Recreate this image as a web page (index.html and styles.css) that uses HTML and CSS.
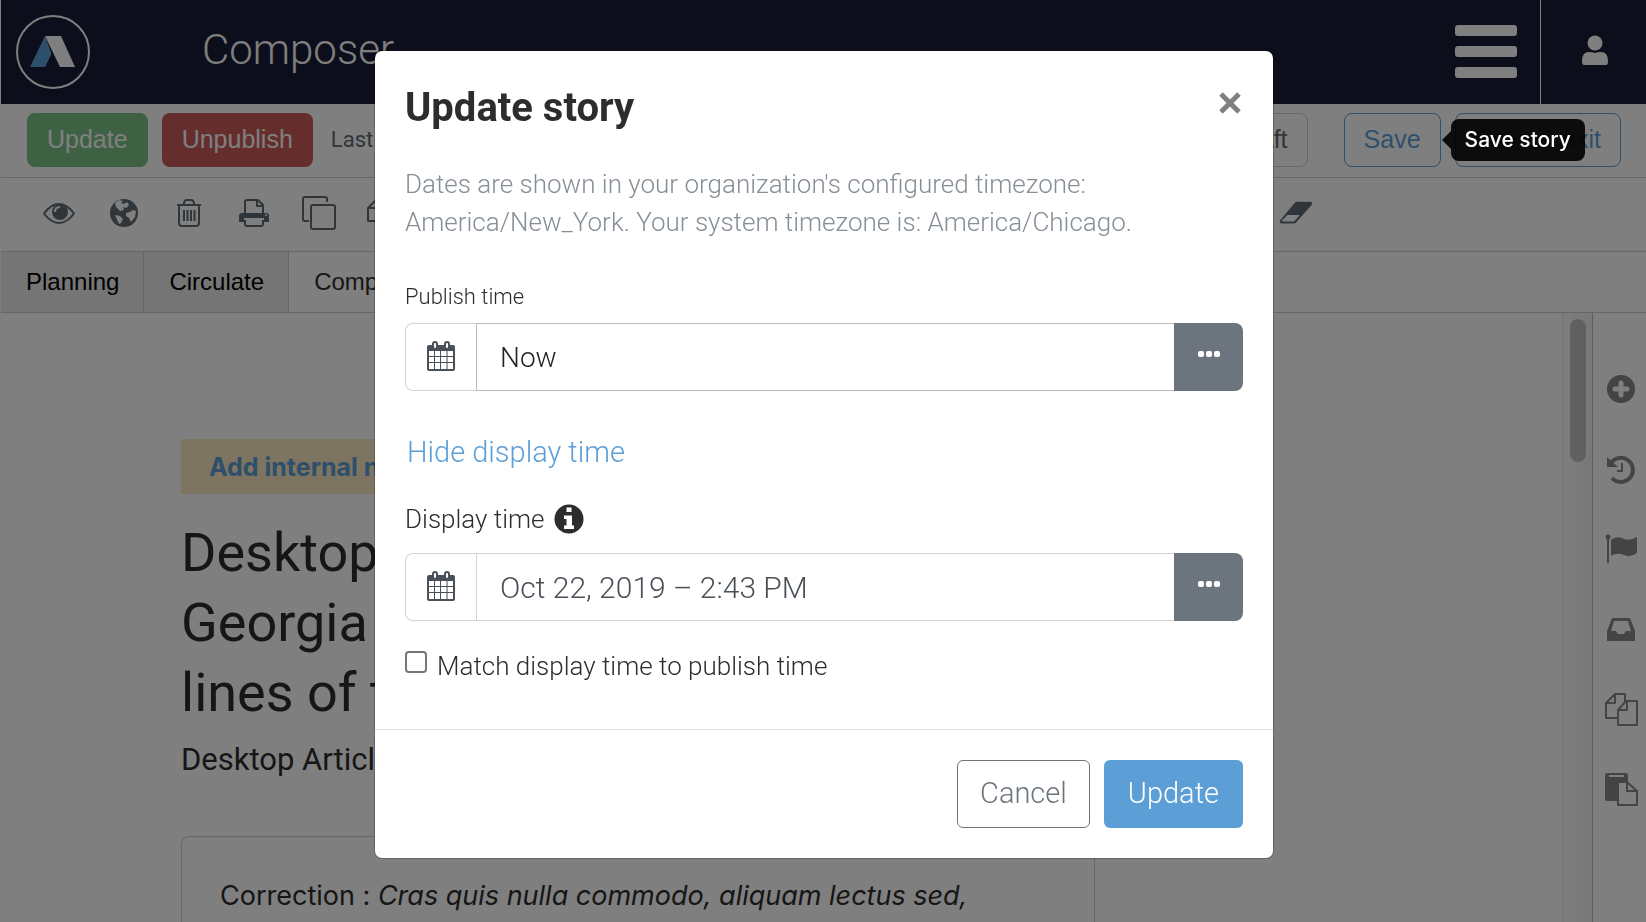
FILE: index.html
```html
<!DOCTYPE html>
<html lang="en">

<head>
  <meta charset="UTF-8" />
  <meta name="viewport" content="width=device-width, initial-scale=1.0" />
  <title>Composer</title>
  <link rel="stylesheet" href="styles.css">
</head>

<body>
  <div class="app">
    <header class="header">
      <svg class="logo" viewBox="0 0 74 74">
        <circle cx="37" cy="37" r="36" fill="none" stroke="#fff" stroke-width="2" />
        <path d="M29 21 L35 37 V40 L29 52 H14 Z" fill="#5c9fd7" />
        <path d="M29 21 H45 L59 52 H44 Z" fill="#fff" />
      </svg>
      <span class="brand">Composer</span>
      <button class="menu" type="button" aria-label="Menu">
        <span></span><span></span><span></span>
      </button>
      <button class="user" type="button" aria-label="Account">
        <svg width="26" height="30" viewBox="0 0 26 30">
          <circle cx="13" cy="8" r="7.5" />
          <path d="M0 26 Q0 17 7 17 Q10 17 13 18 Q16 17 19 17 Q26 17 26 26 Q26 30 24 30 H2 Q0 30 0 26 Z" />
        </svg>
      </button>
    </header>

    <div class="actions">
      <button class="btn green" type="button">Update</button>
      <button class="btn red" type="button">Unpublish</button>
      <span class="last">Last</span>
      <button class="btn draft" type="button">Draft</button>
      <div class="save-wrap">
        <button class="btn blue" type="button">Save</button>
        <div class="tooltip" role="tooltip">Save story</div>
      </div>
      <button class="btn blue" type="button">Save &amp; exit</button>
    </div>

    <div class="toolbar">
      <button type="button" aria-label="Preview">
        <svg viewBox="0 0 34 34">
          <path d="M2 17.500Q9 8 17 8T32 17.500Q25 27 17 27T2 17.500Z" class="line" />
          <circle cx="18" cy="16" r="8" />
          <path d="M13 16Q13 11 18 11" class="cut" />
        </svg>
      </button>
      <button type="button" aria-label="Site">
        <svg viewBox="0 0 34 34">
          <circle cx="17" cy="17" r="14" />
          <path d="M8 7L12 4 16 5 14 7 17 8 20 6 22 9 19 12 16 11 17 14 13 15 9 11Z" class="hole" />
          <path d="M23 16L26 14 29 15 28 21 24 26 22 22 19 20 19 17ZM8 19L13 20 16 23 14 27 12 28Z" class="hole" />
        </svg>
      </button>
      <button type="button" aria-label="Delete">
        <svg viewBox="0 0 34 34">
          <path d="M5 9H29M12 8Q12 4 15 4H19Q22 4 22 8M7 9V27Q7 30 10 30H24Q27 30 27 27V9M12 14V25M15.500 14V25M19 14V25M22.500 14V25" class="line" />
        </svg>
      </button>
      <button type="button" aria-label="Print">
        <svg viewBox="0 0 34 34">
          <path d="M2 26V20Q2 17 5 17H29Q32 17 32 20V26H27V22H7V26Z" />
          <path d="M8 17V6Q8 4 10 4H21L26 9V17M20 4V10H26M8 24V28Q8 30 10 30H24Q26 30 26 28V24" class="line" />
          <circle cx="29" cy="19" r="1" class="hole" />
        </svg>
      </button>
      <button type="button" aria-label="Duplicate">
        <svg viewBox="0 0 34 34">
          <rect x="9" y="9" width="24" height="24" rx="2" class="line" />
          <path d="M7 25H3Q1 25 1 23V3Q1 1 3 1H23Q25 1 25 3V6" class="line" />
        </svg>
      </button>
      <button type="button" aria-label="Copy">
        <svg viewBox="0 0 34 34">
          <path d="M1 12L9 4H20V25H1ZM9 4V12H1" class="line" />
        </svg>
      </button>
      <button class="eraser" type="button" aria-label="Clear formatting">
        <svg viewBox="0 0 36 34">
          <path d="M19 5H34Q36 6 35 8L19 26Q18 28 16 28H3Q0 28 1 25L17 6Z" />
          <path d="M3 25L9 19H22L16 26H4Z" class="hole" />
        </svg>
      </button>
    </div>

    <nav class="tabs">
      <a href="#">Planning</a>
      <a href="#">Circulate</a>
      <a href="#" class="active">Compose</a>
    </nav>

    <div class="workspace">
      <main class="canvas">
        <article class="article">
          <button class="note" type="button">Add internal note</button>
          <h1>Desktop<br>Georgia<br>lines of text</h1>
          <h2>Desktop Article</h2>
          <p class="correction">Correction : <em>Cras quis nulla commodo, aliquam lectus sed,</em></p>
        </article>
      </main>
      <div class="track"><div class="thumb"></div></div>
      <aside class="rail">
        <button type="button" aria-label="Add">
          <svg viewBox="0 0 34 34">
            <circle cx="17" cy="17" r="14" />
            <path d="M17 11V23M11 17H23" class="plus" />
          </svg>
        </button>
        <button type="button" aria-label="History">
          <svg viewBox="0 0 34 34">
            <path d="M7 11A12 12 0 1 1 8 26" class="arc" />
            <path d="M3 5V15H14Z" />
            <path d="M18 11V19H13" class="line" />
          </svg>
        </button>
        <button type="button" aria-label="Flag">
          <svg viewBox="0 0 34 34">
            <circle cx="4" cy="5" r="2.500" />
            <rect x="3" y="5" width="2" height="26" />
            <path d="M7 8Q13 3 20 7Q26 9 33 5V21Q26 26 20 23Q13 20 7 24Z" />
          </svg>
        </button>
        <button type="button" aria-label="Inbox">
          <svg viewBox="0 0 34 34">
            <path d="M8 6H26L31 19V29H3V19Z" />
            <path d="M10 9H24L27 19H22L20 22H14L12 19H7Z" class="hole" />
          </svg>
        </button>
        <button type="button" aria-label="Copies">
          <svg viewBox="0 0 34 34">
            <path d="M13 26H2V11L11 2H21V10M11 2V11H2M14 18L22 9H33V33H14ZM23 9V18H14" class="line" />
          </svg>
        </button>
        <button type="button" aria-label="Paste">
          <svg viewBox="0 0 34 34">
            <path d="M3 1H22Q24 1 24 3V10H14V29H3Q1 29 1 27V3Q1 1 3 1Z" />
            <path d="M5 3H20V5H5Z" class="hole" />
            <path d="M14 10H23L33 19V33H14ZM23 10V19H33" class="line" />
          </svg>
        </button>
      </aside>
    </div>
  </div>

  <div class="backdrop">
    <form class="modal" role="dialog" aria-labelledby="title">
      <div class="modal-body">
        <div class="modal-head">
          <h3 id="title">Update story</h3>
          <button class="close" type="button" aria-label="Close">
            <svg width="22" height="22" viewBox="0 0 22 22">
              <path d="M2 2L20 20M20 2L2 20" />
            </svg>
          </button>
        </div>
        <p class="info">Dates are shown in your organization's configured timezone: America/New_York. Your system timezone is: America/Chicago.</p>

        <label class="label small" for="publish">Publish time</label>
        <div class="group">
          <span class="addon">
            <svg width="28" height="30" viewBox="0 0 28 30">
              <path d="M2 4H26Q28 4 28 6V28Q28 30 26 30H2Q0 30 0 28V6Q0 4 2 4Z" />
              <path d="M2 10H7V15H2ZM8 10H13V15H8ZM14 10H19.500V15H14ZM20.500 10H26V15H20.500ZM2 16H7V21H2ZM8 16H13V21H8ZM14 16H19.500V21H14ZM20.500 16H26V21H20.500ZM2 22H7V28H2ZM8 22H13V28H8ZM14 22H19.500V28H14ZM20.500 22H26V28H20.500Z" class="cells" />
              <rect x="6" y="1" width="4" height="7" rx="2" class="ring" />
              <rect x="18" y="1" width="4" height="7" rx="2" class="ring" />
            </svg>
          </span>
          <input class="field dark" id="publish" type="text" value="Now">
          <button class="more" type="button" aria-label="More publish options"><i></i><i></i><i></i></button>
        </div>

        <a class="toggle" href="#">Hide display time</a>

        <label class="label" for="display">Display time
          <svg width="30" height="30" viewBox="0 0 30 30">
            <circle cx="15" cy="15" r="14.500" fill="#2d2d2d" />
            <path d="M12.500 3.500H17.500V8H12.500ZM10 11.500H18V21.500H20V25H10V21.500H12.500V15H10Z" fill="#fff" />
          </svg>
        </label>
        <div class="group">
          <span class="addon">
            <svg width="28" height="30" viewBox="0 0 28 30">
              <path d="M2 4H26Q28 4 28 6V28Q28 30 26 30H2Q0 30 0 28V6Q0 4 2 4Z" />
              <path d="M2 10H7V15H2ZM8 10H13V15H8ZM14 10H19.500V15H14ZM20.500 10H26V15H20.500ZM2 16H7V21H2ZM8 16H13V21H8ZM14 16H19.500V21H14ZM20.500 16H26V21H20.500ZM2 22H7V28H2ZM8 22H13V28H8ZM14 22H19.500V28H14ZM20.500 22H26V28H20.500Z" class="cells" />
              <rect x="6" y="1" width="4" height="7" rx="2" class="ring" />
              <rect x="18" y="1" width="4" height="7" rx="2" class="ring" />
            </svg>
          </span>
          <input class="field" id="display" type="text" value="Oct 22, 2019 – 2:43 PM">
          <button class="more" type="button" aria-label="More display options"><i></i><i></i><i></i></button>
        </div>

        <div class="check">
          <input type="checkbox" id="match">
          <label for="match">Match display time to publish time</label>
        </div>
      </div>
      <div class="modal-foot">
        <button class="cancel" type="button">Cancel</button>
        <button class="submit" type="submit">Update</button>
      </div>
    </form>
  </div>
</body>

</html>
```

FILE: styles.css
```css
* {
  margin: 0;
  padding: 0;
  box-sizing: border-box;
}

body {
  font-family: Roboto, "Liberation Sans", sans-serif;
  color: #2d2d2d;
  background-color: #fff;
  overflow: hidden;
}

button {
  font: inherit;
  border: 0;
  background: none;
  cursor: pointer;
}

a {
  text-decoration: none;
}

.app {
  height: 100vh;
  display: flex;
  flex-direction: column;
  border-left: 1px solid rgba(255, 255, 255, .1);
}

/* header */
.header {
  height: 104px;
  flex: none;
  display: flex;
  align-items: center;
  padding-left: 15px;
  background-color: #1a1c36;
}

.logo {
  width: 74px;
  height: 74px;
}

.brand {
  margin-left: 112px;
  padding-bottom: 6px;
  font-size: 42px;
  font-weight: 300;
  color: #fff;
}

.menu {
  width: 62px;
  margin-left: auto;
  margin-right: 23px;
  margin-bottom: 2px;
  display: flex;
  flex-direction: column;
  gap: 10px;
}

.menu span {
  height: 11px;
  border-radius: 3px;
  background-color: #fff;
}

.user {
  width: 106px;
  height: 104px;
  padding-left: 2px;
  border-left: 1px solid #fff;
  fill: #fff;
}

/* action buttons */
.actions {
  height: 74px;
  flex: none;
  display: flex;
  align-items: center;
  gap: 14px;
  padding: 0 25px 2px 26px;
  border-bottom: 1px solid #ccc;
}

.btn {
  height: 54px;
  padding: 0 19px 1px;
  font-family: "Liberation Sans", Arial, sans-serif;
  font-size: 25px;
  border: 1px solid transparent;
  border-radius: 8px;
}

.green {
  color: #fff;
  background-color: #7ec286;
}

.red {
  color: #fff;
  background-color: #ca5c58;
}

.last {
  margin-left: 4px;
  font-size: 22px;
  color: #5f6b73;
}

.draft {
  margin-left: auto;
  margin-right: 22px;
  color: #5f6b73;
  border-color: #ccc;
}

.blue {
  color: #5c9fd7;
  border-color: #5c9fd7;
}

.save-wrap {
  position: relative;
}

.tooltip {
  position: absolute;
  z-index: 20;
  left: 107px;
  top: 6px;
  padding: 0 14px;
  line-height: 42px;
  font-family: Inter, sans-serif;
  font-size: 21px;
  font-weight: 500;
  white-space: nowrap;
  color: #fff;
  background-color: rgba(0, 0, 0, .9);
  border-radius: 8px;
}

.tooltip::before {
  content: "";
  position: absolute;
  left: -9px;
  top: 12px;
  border: 9px solid transparent;
  border-left: 0;
  border-right-color: rgba(0, 0, 0, .9);
}

/* toolbar */
.toolbar {
  height: 74px;
  flex: none;
  display: flex;
  align-items: center;
  gap: 31px;
  padding: 0 333px 4px 41px;
  border-bottom: 1px solid #ccc;
}

.toolbar button,
.rail button {
  width: 34px;
  height: 34px;
}

.toolbar svg,
.rail svg {
  display: block;
  width: 34px;
  height: 34px;
  fill: #5f6b73;
}

.toolbar .eraser {
  margin-left: auto;
}

.toolbar .line,
.rail .line {
  fill: none;
  stroke: #5f6b73;
  stroke-width: 2;
  stroke-linejoin: round;
}

.toolbar .hole,
.rail .hole {
  fill: #fff;
}

.cut {
  fill: none;
  stroke: #fff;
  stroke-width: 2;
}

/* tabs */
.tabs {
  height: 61px;
  flex: none;
  display: flex;
  border-bottom: 1px solid #ccc;
}

.tabs a {
  padding: 0 24px 0 25px;
  line-height: 60px;
  font-family: "Liberation Sans", Arial, sans-serif;
  font-size: 24px;
  color: #000;
  background-color: #eaeaea;
  border-right: 1px solid #ccc;
}

.tabs .active {
  color: #2d2d2d;
  background-color: #fff;
}

/* editor */
.workspace {
  flex: 1;
  min-height: 0;
  display: flex;
}

.canvas {
  flex: 1;
  overflow: hidden;
  padding: 126px 180px 0;
}

.article {
  max-width: 914px;
}

.note {
  display: block;
  width: 100%;
  height: 55px;
  padding-left: 28px;
  text-align: left;
  font-family: Inter, sans-serif;
  font-size: 25px;
  font-weight: 700;
  color: #5c9fd7;
  background-color: #fae8c2;
}

.article h1,
.article h2 {
  font-weight: 400;
}

.article h1 {
  margin-top: 24px;
  font-size: 54px;
  line-height: 70px;
}

.article h2 {
  margin-top: 8px;
  font-size: 31px;
  line-height: 48px;
}

.correction {
  height: 140px;
  margin-top: 52px;
  padding: 38px;
  font-family: Inter, sans-serif;
  font-size: 27px;
  line-height: 42px;
  border: 1px solid #ccc;
  border-radius: 8px;
}

.track {
  width: 30px;
  padding: 6px 6px 0;
  background: linear-gradient(to right, #fafafa, #f0f0f0);
  border-left: 2px solid #eee;
}

.thumb {
  height: 143px;
  border-radius: 8px;
  background-color: #c1c1c1;
}

.rail {
  width: 54px;
  display: flex;
  flex-direction: column;
  align-items: center;
  gap: 46px;
  padding-top: 59px;
  padding-left: 2px;
  border-left: 1px solid #bbb;
}

.rail svg {
  fill: #888;
}

.rail .line,
.rail .arc {
  fill: none;
  stroke: #888;
}

.rail .arc {
  stroke-width: 4;
}

.plus {
  stroke: #fff;
  stroke-width: 5;
  stroke-linecap: round;
}

/* modal */
.backdrop {
  position: fixed;
  z-index: 10;
  top: 0;
  right: 0;
  bottom: 0;
  left: 0;
  padding: 50px 0 0 2px;
  background-color: rgba(0, 0, 0, .5);
}

.modal {
  max-width: 900px;
  margin: 0 auto;
  border: 1px solid rgba(0, 0, 0, .2);
  border-radius: 8px;
  background-color: #fff;
  background-clip: padding-box;
}

.modal-body {
  padding: 30px 30px 44px;
}

.modal-head {
  display: flex;
  justify-content: space-between;
  align-items: center;
  height: 53px;
}

.modal h3 {
  font-size: 40px;
  font-weight: 700;
}

.close {
  width: 26px;
  height: 44px;
  padding-bottom: 6px;
}

.close path {
  stroke: #808080;
  stroke-width: 5;
}

.info {
  margin: 31px 0 36px;
  font-size: 26px;
  line-height: 38px;
  font-weight: 300;
  color: #868e96;
}

.label {
  display: flex;
  align-items: center;
  gap: 10px;
  height: 38px;
  margin-bottom: 15px;
  font-size: 26px;
}

.small {
  margin-bottom: 8px;
  font-size: 22px;
}

.group {
  display: flex;
  height: 68px;
}

.addon {
  width: 71px;
  display: flex;
  align-items: center;
  justify-content: center;
  padding-bottom: 2px;
  border: 1px solid #ced4da;
  border-right: 0;
  border-radius: 8px 0 0 8px;
  fill: #495057;
}

.cells {
  fill: #fff;
}

.ring {
  fill: #fff;
  stroke: #495057;
  stroke-width: 2;
}

.field {
  flex: 1;
  min-width: 0;
  padding: 0 23px;
  font-family: inherit;
  font-size: 30px;
  font-weight: 300;
  color: #495057;
  border: 1px solid #ced4da;
  border-right: 0;
}

.dark {
  font-size: 28px;
  color: #212529;
  border-color: #bbb;
}

.more {
  width: 69px;
  display: flex;
  align-items: center;
  justify-content: center;
  gap: 2px;
  padding-bottom: 6px;
  border-radius: 0 8px 8px 0;
  background-color: #6c757d;
}

.more i {
  width: 6px;
  height: 6px;
  border-radius: 2px;
  background-color: #fff;
}

.toggle {
  display: block;
  margin: 42px 0 29px 2px;
  font-size: 29px;
  line-height: 38px;
  font-weight: 300;
  color: #5c9fd7;
}

.check {
  display: flex;
  align-items: center;
  gap: 10px;
  margin-top: 26px;
  font-size: 26px;
  line-height: 38px;
}

.check input {
  width: 22px;
  height: 22px;
  margin-bottom: 8px;
  appearance: none;
  border: 2px solid #767676;
  border-radius: 4px;
}

.label,
.check {
  font-weight: 300;
}

.modal-foot {
  display: flex;
  justify-content: flex-end;
  gap: 14px;
  padding: 30px;
  border-top: 1px solid #dee2e6;
}

.modal-foot button {
  height: 68px;
  padding: 0 22px 2px;
  font-size: 29px;
  font-weight: 300;
  border-radius: 6px;
}

.modal-foot .cancel {
  color: #6c757d;
  border: 1px solid #6c757d;
}

.modal-foot .submit {
  padding: 0 24px 2px;
  color: #fff;
  background-color: #5c9fd7;
}
```
